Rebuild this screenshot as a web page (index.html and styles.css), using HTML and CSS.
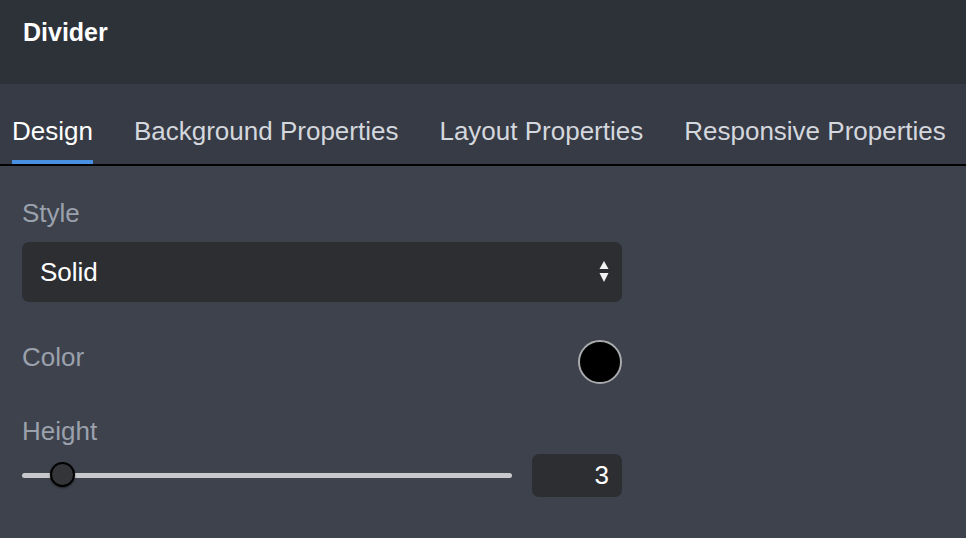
FILE: index.html
```html
<html>

<head>
    <link rel="stylesheet" href="styles.css">
</head>

<body>
    <div class="header">Divider</div>

    <div class="tabs">
        <div class="tab active">Design</div>
        <div class="tab">Background Properties</div>
        <div class="tab">Layout Properties</div>
        <div class="tab">Responsive Properties</div>
    </div>

    <div class="panel">
        <div class="label label-style">Style</div>
        <div class="select">
            <span>Solid</span>
            <svg class="arrows" width="10" height="24" viewBox="0 0 10 24">
                <polygon points="5,1 9.5,9 0.5,9" fill="#f2f2f2" />
                <polygon points="0.5,13 9.5,13 5,22" fill="#f2f2f2" />
            </svg>
        </div>

        <div class="color-row">
            <div class="label color-label">Color</div>
            <div class="swatch"></div>
        </div>

        <div class="label label-height">Height</div>
        <div class="slider-row">
            <input class="range" type="range" min="0" max="50" value="3" />
            <input class="number" type="text" value="3" />
        </div>
    </div>
</body>

</html>
```

FILE: styles.css
```css
html, body {
    margin: 0;
    background: #3d424c;
    font-family: "Liberation Sans", Arial, sans-serif;
}

.header {
    height: 84px;
    box-sizing: border-box;
    padding: 17px 0 0 23px;
    background: #2d3138;
    color: #ffffff;
    font-size: 25px;
    font-weight: bold;
    line-height: 30px;
}

.tabs {
    display: flex;
    gap: 41px;
    padding-left: 12px;
    background: #363b45;
    border-bottom: 2px solid #000000;
    overflow: hidden;
}

.tab {
    padding: 32px 0 14px 0;
    border-bottom: 4px solid transparent;
    color: #d4d7dd;
    font-size: 26px;
    line-height: 30px;
    white-space: nowrap;
}

.tab.active {
    color: #ffffff;
    border-bottom-color: #4a90e2;
}

.panel {
    width: 600px;
    padding: 0 22px;
}

.label {
    color: #9ba1ac;
    font-size: 26px;
    line-height: 30px;
}

.label-style {
    margin-top: 32px;
}

.select {
    margin-top: 14px;
    height: 60px;
    box-sizing: border-box;
    padding: 0 13px 0 18px;
    display: flex;
    align-items: center;
    justify-content: space-between;
    background: #2d2e32;
    border-radius: 7px;
    color: #ffffff;
    font-size: 26px;
    line-height: 30px;
}

.arrows {
    display: block;
}

.color-row {
    margin-top: 38px;
    display: flex;
    justify-content: space-between;
    align-items: flex-start;
}

.color-label {
    padding-top: 2px;
}

.swatch {
    width: 44px;
    height: 44px;
    box-sizing: border-box;
    border: 2px solid #a9aaad;
    border-radius: 50%;
    background: #000000;
}

.label-height {
    margin-top: 32px;
}

.slider-row {
    margin-top: 8px;
    display: flex;
    align-items: center;
    gap: 20px;
}

.range {
    -webkit-appearance: none;
    appearance: none;
    margin: 0;
    width: 490px;
    height: 26px;
    background: transparent;
}

.range::-webkit-slider-runnable-track {
    height: 5px;
    background: #c6c8cc;
    border-radius: 3px;
}

.range::-webkit-slider-thumb {
    -webkit-appearance: none;
    width: 25px;
    height: 25px;
    margin-top: -11px;
    box-sizing: border-box;
    border: 2px solid #000000;
    border-radius: 50%;
    background: #343538;
    box-shadow: 0 1px 2px rgba(0, 0, 0, 0.5);
}

.number {
    width: 90px;
    height: 43px;
    box-sizing: border-box;
    padding: 0 13px 0 0;
    border: none;
    border-radius: 7px;
    background: #2d2e32;
    color: #ffffff;
    font-family: "Liberation Sans", Arial, sans-serif;
    font-size: 26px;
    text-align: right;
    outline: none;
}
```
